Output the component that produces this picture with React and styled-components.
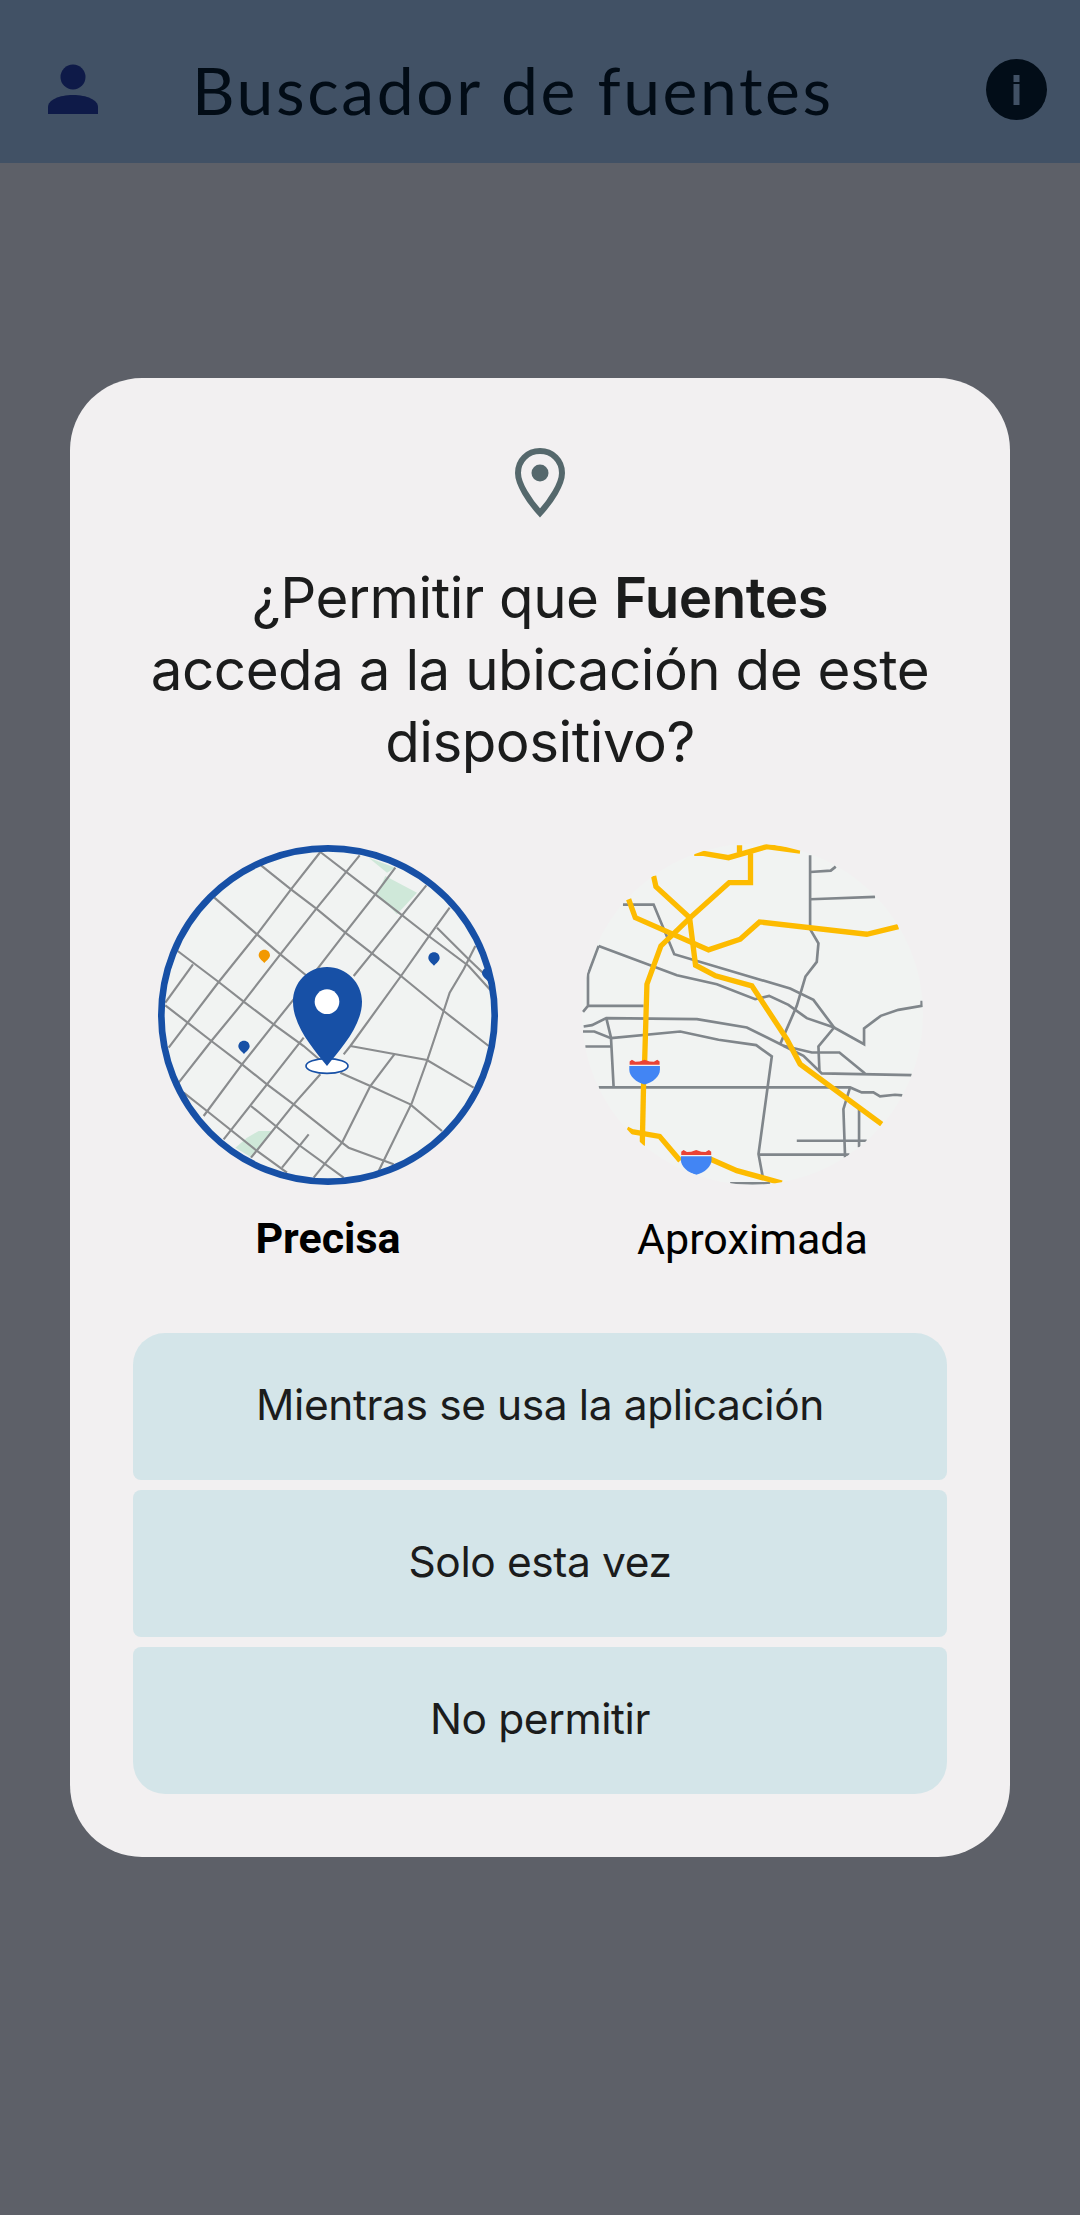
import styled, { createGlobalStyle } from "styled-components";

const GlobalStyle = createGlobalStyle`
  html, body {
    margin: 0;
    padding: 0;
    background: #5d6068;
  }
`;

const Page = styled.div`
  width: 1080px;
  height: 2215px;
  overflow: hidden;
  background: #5d6068;
  font-family: "Inter", "Liberation Sans", sans-serif;
`;

const Header = styled.header`
  height: 163px;
  display: flex;
  align-items: center;
  padding: 15px 33px 0 48px;
  box-sizing: border-box;
  background: #415165;
`;

const HeaderTitle = styled.h1`
  flex: 1;
  margin: 0 0 0 94px;
  font-family: "Lato", "Liberation Sans", sans-serif;
  font-size: 66px;
  font-weight: 400;
  letter-spacing: 2.6px;
  font-variant-ligatures: none;
  color: #020c16;
`;

const Card = styled.section`
  margin: 215px 70px 0;
  padding: 70px 63px 63px;
  border-radius: 72px;
  background: #f2f0f1;
  display: flex;
  flex-direction: column;
  align-items: center;
`;

const DialogTitle = styled.h2`
  margin: 44px 0 0;
  font-size: 56.5px;
  line-height: 72px;
  font-weight: 400;
  letter-spacing: -0.5px;
  text-align: center;
  white-space: nowrap;
  color: #1b1c1c;
  b {
    font-weight: 600;
  }
`;

const MapRow = styled.div`
  align-self: stretch;
  display: flex;
  justify-content: space-between;
  margin-top: 66px;
  padding: 0 23px 0 24px;
`;

const MapOption = styled.div`
  display: flex;
  flex-direction: column;
  align-items: center;
  gap: 27px;
`;

const MapLabel = styled.span`
  font-family: "Roboto", "Liberation Sans", sans-serif;
  font-size: 43px;
  line-height: 50px;
  font-weight: ${(p) => (p.$selected ? 700 : 400)};
  color: #000;
`;

const Choices = styled.div`
  align-self: stretch;
  display: flex;
  flex-direction: column;
  gap: 10px;
  margin-top: 69px;
`;

const Choice = styled.button`
  height: 147px;
  border: 0;
  padding: 0 0 4px;
  background: #d4e5e9;
  border-radius: 8px;
  font-family: inherit;
  font-size: 42.5px;
  letter-spacing: -0.4px;
  color: #1b1c1c;
  &:first-child {
    border-radius: 32px 32px 8px 8px;
  }
  &:last-child {
    border-radius: 8px 8px 32px 32px;
  }
`;

function PersonIcon() {
  return (
    <svg width="50" height="50" viewBox="0 0 50 50">
      <ellipse cx="25" cy="13" rx="12.5" ry="12.5" fill="#0e1a48" />
      <path d="M0 50V43C0 36 11 31 25 31S50 36 50 43V50Z" fill="#0e1a48" />
    </svg>
  );
}

function InfoIcon() {
  return (
    <svg width="61" height="61" viewBox="0 0 61 61">
      <circle cx="30.5" cy="30.5" r="30.5" fill="#020d18" />
      <rect x="27.5" y="16" width="6" height="7" fill="#415165" />
      <rect x="27.5" y="25" width="6" height="21" fill="#415165" />
    </svg>
  );
}

function LocationIcon() {
  return (
    <svg width="50" height="70" viewBox="0 0 50 70">
      <path
        d="M25 3C12.5 3 3 12.5 3 25C3 36 14 53 25 65C36 53 47 36 47 25C47 12.5 37.5 3 25 3Z"
        fill="none"
        stroke="#55686c"
        strokeWidth="6"
      />
      <circle cx="25" cy="25" r="8.5" fill="#55686c" />
    </svg>
  );
}

const preciseStreets = [
  "M540 68L705 195L865 320L985 410L1050 482",
  "M362 108L452 180L528 238L615 310L695 372L782 440L910 545L1045 650",
  "M222 205L350 315L420 375L500 440",
  "M112 365L235 458L310 517L400 585L490 650L560 710",
  "M75 528L142 580L213 635L305 705L380 765L460 825L605 940L625 955L760 1005",
  "M130 790L200 845L350 965L440 1030",
  "M332 830L480 950L610 1045",
  "M540 68L452 180L350 315L235 458L142 580L85 655",
  "M658 78L528 238L420 375L310 517L213 635L115 760",
  "M765 115L705 195L615 310L530 420L460 510L400 585L305 705L190 860",
  "M858 168L785 258L695 372L640 440",
  "M928 235L865 322L782 440L630 650L610 675",
  "M490 625L380 765L250 930",
  "M540 735L460 825L332 985",
  "M158 405L75 520",
  "M505 915L425 1015",
  "M605 940L520 1045",
  "M890 295L985 390L1048 450",
  "M1005 350L970 420L928 490L910 545L860 695L815 820L715 1025",
  "M630 650L860 692L1000 775",
  "M600 730L690 770L810 825L905 905",
  "M762 675L690 770L605 940",
];

const approxStreets = [
  "M720 78V300L745 342L740 398L706 442L680 530L630 645",
  "M720 128L782 124L797 112",
  "M720 210L915 203",
  "M158 226H250L312 375L660 478L730 512L792 595L745 652L748 725",
  "M85 350L320 438L440 465L555 510L597 500L655 527L710 567L792 595L882 645V598L932 560L985 542L1055 530V515",
  "M85 350L53 435V530L38 548",
  "M53 530H220",
  "M40 592L65 588L108 567L380 570L530 595L640 650L725 670H808L885 733",
  "M108 567L122 625L130 775",
  "M38 607H72L122 627L330 607L445 632L558 648L605 682L565 975L578 1045",
  "M45 652H122",
  "M640 650L700 680L755 733L1025 738",
  "M85 775H840L875 790H910L930 802L975 797L997 799",
  "M840 775L820 840L825 985",
  "M867 835V955",
  "M680 935H890",
  "M565 977H838",
  "M480 1063H600",
];

const highways = [
  "M372 72H400L475 85L590 52L690 65",
  "M508 48V70",
  "M541 72V160H477L360 265L272 350L230 465L223 700",
  "M250 140L257 172L358 265L376 408L436 440L545 470L650 630L690 705L935 885",
  "M175 210L195 265L415 362L510 330L568 278L890 315L985 292",
  "M220 760L216 950",
  "M170 900L185 908L268 922L330 995",
  "M420 990L500 1025L635 1062",
];

function SmallPin({ x, y, color }) {
  return (
    <path
      d={`M${x} ${y - 17}C${x - 10} ${y - 17} ${x - 17} ${y - 10} ${x - 17} ${y}C${x - 17} ${y + 8} ${x - 7} ${y + 16} ${x} ${y + 23}C${x + 7} ${y + 16} ${x + 17} ${y + 8} ${x + 17} ${y}C${x + 17} ${y - 10} ${x + 10} ${y - 17} ${x} ${y - 17}Z`}
      fill={color}
    />
  );
}

function PreciseMap() {
  return (
    <svg width="342" height="342" viewBox="50 44 1026 1026">
      <defs>
        <clipPath id="preciseClip">
          <circle cx="563" cy="557" r="500" />
        </clipPath>
      </defs>
      <circle cx="563" cy="557" r="500" fill="#f1f3f2" />
      <g clipPath="url(#preciseClip)">
        <path d="M735 140L830 190L770 255L710 195Z" fill="#cfe8d9" />
        <path d="M685 85L765 115L740 130Z" fill="#cfe8d9" />
        <path d="M355 905H395L335 985L285 955L320 925Z" fill="#cfe8d9" />
        <g fill="none" stroke="#8a8c8e" strokeWidth="6.5">
          {preciseStreets.map((d) => (
            <path key={d} d={d} />
          ))}
        </g>
        <SmallPin x={372} y={378} color="#f29900" />
        <SmallPin x={881} y={386} color="#1750a6" />
        <SmallPin x={311} y={651} color="#1750a6" />
        <SmallPin x={1042} y={432} color="#1750a6" />
      </g>
      <circle cx="563" cy="557" r="500" fill="none" stroke="#1750a6" strokeWidth="20" />
      <ellipse cx="560" cy="710" rx="63" ry="22" fill="#fff" stroke="#1750a6" strokeWidth="5" />
      <path
        d="M560 413C502 413 458 460 458 517C458 590 520 660 560 710C600 660 665 590 665 517C665 460 618 413 560 413Z"
        fill="#1750a6"
      />
      <circle cx="560" cy="517" r="37" fill="#fff" />
    </svg>
  );
}

function Shield({ x, y }) {
  return (
    <g>
      <path
        d={`M${x - 45} ${y + 15}V${y + 5}L${x - 38} ${y}L${x - 28} ${y + 6}L${x - 15} ${y + 5}L${x} ${y}L${x + 15} ${y + 5}L${x + 28} ${y + 6}L${x + 38} ${y}L${x + 45} ${y + 5}V${y + 15}Z`}
        fill="#ea4335"
      />
      <path
        d={`M${x - 46} ${y + 19}H${x + 46}V${y + 30}C${x + 46} ${y + 50} ${x + 25} ${y + 68} ${x} ${y + 74}C${x - 25} ${y + 68} ${x - 46} ${y + 50} ${x - 46} ${y + 30}Z`}
        fill="#4285f4"
      />
    </g>
  );
}

function ApproxMap() {
  return (
    <svg width="343" height="343" viewBox="32 44 1030 1030">
      <defs>
        <clipPath id="approxClip">
          <circle cx="547" cy="555" r="512" />
        </clipPath>
      </defs>
      <circle cx="547" cy="555" r="512" fill="#f1f3f2" />
      <g clipPath="url(#approxClip)">
        <g fill="none" stroke="#80868b" strokeWidth="8">
          {approxStreets.map((d) => (
            <path key={d} d={d} />
          ))}
        </g>
        <g fill="none" stroke="#fdbb00" strokeWidth="16">
          {highways.map((d) => (
            <path key={d} d={d} />
          ))}
        </g>
        <Shield x={223} y={692} />
        <Shield x={378} y={963} />
      </g>
    </svg>
  );
}

export default function App() {
  return (
    <Page>
      <GlobalStyle />
      <Header>
        <PersonIcon />
        <HeaderTitle>Buscador de fuentes</HeaderTitle>
        <InfoIcon />
      </Header>
      <Card>
        <LocationIcon />
        <DialogTitle>
          ¿Permitir que <b>Fuentes</b>
          <br />
          acceda a la ubicación de este
          <br />
          dispositivo?
        </DialogTitle>
        <MapRow>
          <MapOption>
            <PreciseMap />
            <MapLabel $selected>Precisa</MapLabel>
          </MapOption>
          <MapOption>
            <ApproxMap />
            <MapLabel>Aproximada</MapLabel>
          </MapOption>
        </MapRow>
        <Choices>
          <Choice>Mientras se usa la aplicación</Choice>
          <Choice>Solo esta vez</Choice>
          <Choice>No permitir</Choice>
        </Choices>
      </Card>
    </Page>
  );
}
